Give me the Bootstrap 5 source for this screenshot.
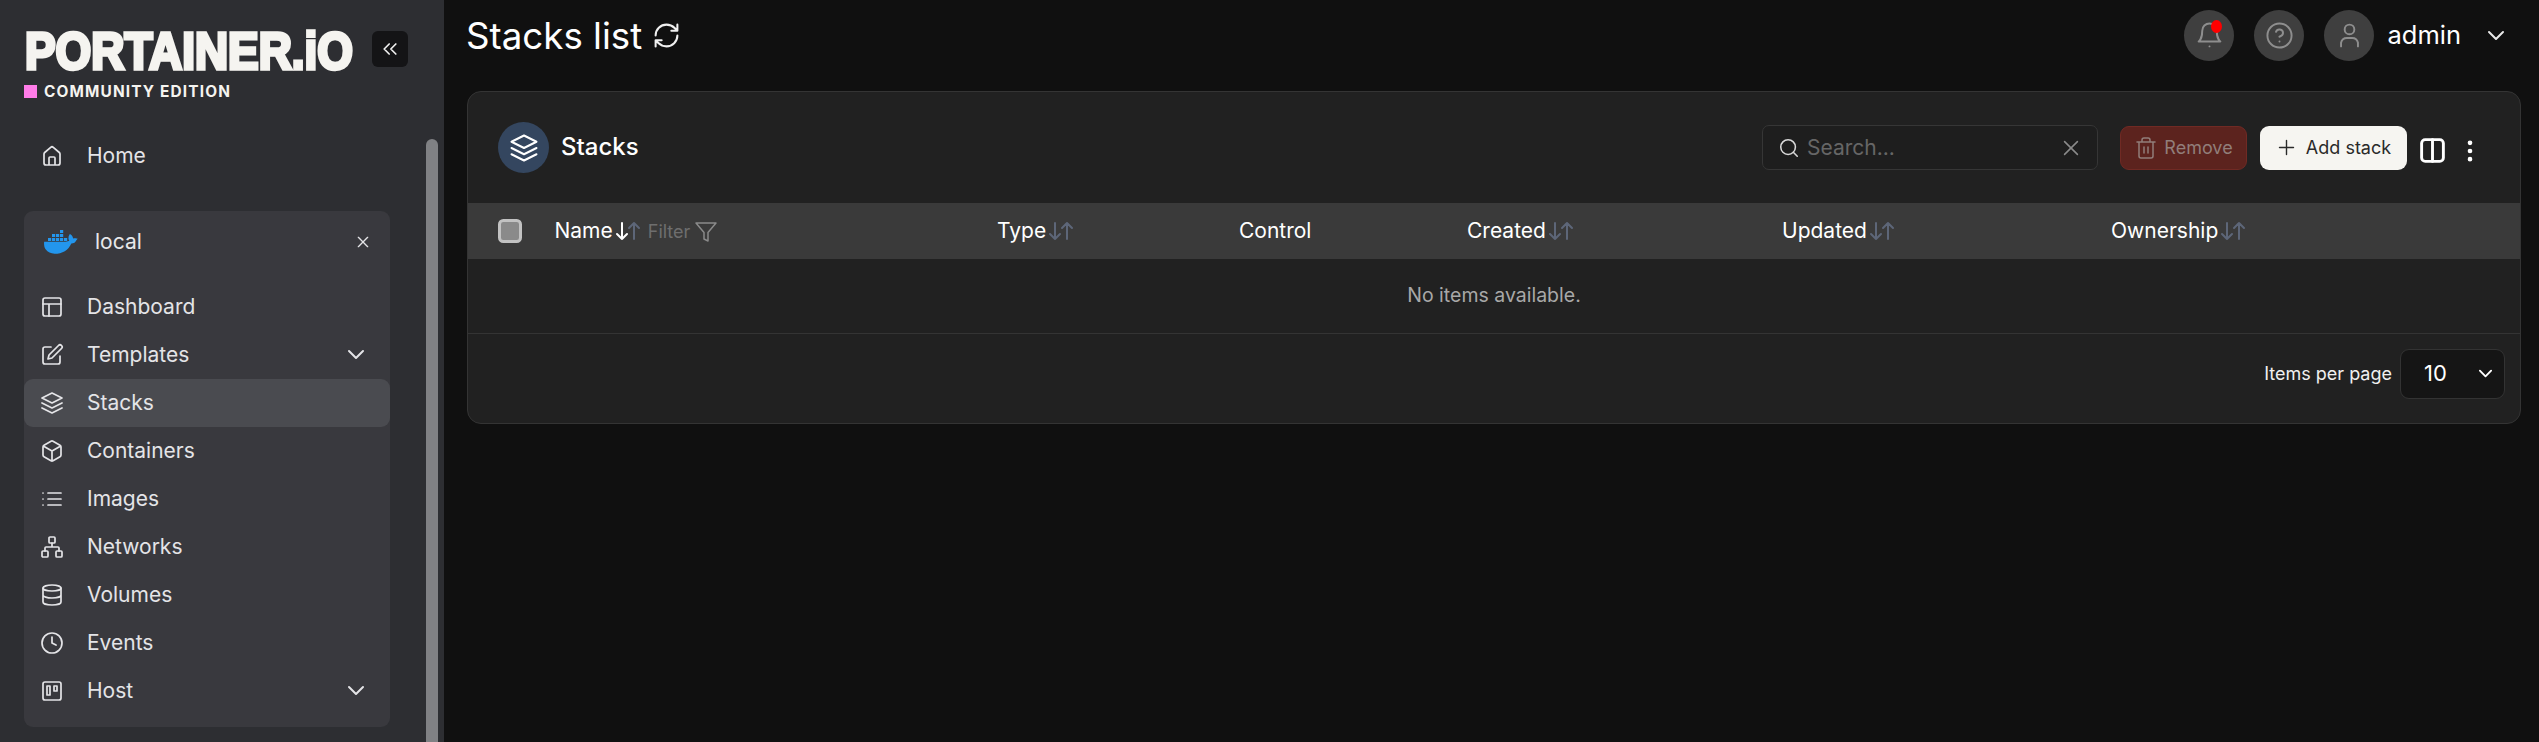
<!doctype html>
<html lang="en"><head><meta charset="utf-8"><title>Stacks list</title>
<link href="https://cdn.jsdelivr.net/npm/bootstrap@5.3.0/dist/css/bootstrap.min.css" rel="stylesheet">
<style>
html,body{height:742px;overflow:hidden}
body{background:#101010;color:#fff;font-family:Inter,"Liberation Sans",sans-serif;font-size:21px}
svg.ic{fill:none;stroke:currentColor;stroke-width:2;stroke-linecap:round;stroke-linejoin:round;flex:none}
.shell{height:742px}
.side{width:444px;background:#2d2e32;flex:none;overflow:hidden}
.side-in{width:366px;margin-left:24px;flex:none}
.brand{height:138px;padding-top:32px}
.brand-top{height:38px;width:384px}
.logo-svg{display:block;width:330px;height:38px;overflow:visible;flex:none}
.logo-svg text{font-family:"Liberation Sans",sans-serif;font-weight:700;font-size:51px;fill:#f5f4f0;stroke:#f5f4f0;stroke-width:3.6px}
.collapse-btn{width:36px;height:36px;background:#141416;border-radius:6px;color:#f0f0f0;margin-left:18px;margin-top:-1px;flex:none}
.edition{margin-top:15px;font-size:15.4px;line-height:12px;font-weight:700;letter-spacing:1.15px;color:#f5f4f0}
.pink{width:13px;height:13px;background:#ff7ce8;margin-right:7px}
.nav-row{height:48px;padding-left:16px;color:#e4e4e7;text-decoration:none;border-radius:9px;font-size:21px}
.nav-row .ic{width:24px;height:24px;margin-right:23px;stroke-width:1.7}
.nav-row:hover{color:#e4e4e7}
.nav-row .chev{margin-right:22px;margin-left:auto;width:24px;height:24px;stroke-width:2}
.home-row{margin-top:-6px;margin-bottom:31px;height:48px}
.env{background:#39393e;border-radius:9px;height:516px}
.env-head{height:72px;padding:0 19px 11px 20px;font-size:21px;color:#e4e4e7}
.env-head .lbl{margin-left:17px;color:#e8e8ea}
.on-row{background:#4a4b50}
.thumb{width:12px;margin:139px 0 0 36px;background:#808184;border-radius:6px 6px 0 0;flex:none}
.pg{min-width:0}
.topbar{height:91px;padding:10px 31px 0 22px}
.page-title{font-size:36.7px;font-weight:400;margin:0;line-height:50px;color:#fff}
.title-ref{width:29px;height:29px;margin-left:10px;color:#f0f0f0;stroke-width:1.7!important}
.circle{width:50px;height:51px;border-radius:50%;background:#3f3f3f;color:#8e8e8e;margin-right:20px}
.circle .ic{width:29px;height:29px;stroke-width:1.6}
.dot-red{right:12px;top:10px;width:11px;height:13px;background:#f00;border-radius:50%}
.uname{margin-left:-7px;font-size:25.5px;color:#fff;margin-right:23px}
.uchev{width:24px;height:24px;color:#e8e8e8;stroke-width:1.7}
.sheet{margin:0 18px 0 23px;background:#212121;border:1px solid #343434;border-radius:14px;height:333px;overflow:hidden}
.sheet-head{height:111px;padding:0 36px 0 30px}
.tile{width:51px;height:51px;border-radius:50%;background:#34465f;color:#fff}
.tile .ic{width:30px;height:30px;stroke-width:1.6}
.sheet-title{font-size:24px;font-weight:500;margin:-2px 0 0 12px;color:#fff;line-height:1}
.srch{width:336px;height:45px;border:1px solid #363636;border-radius:7px;background:#1e1e1e;padding:0 15px}
.srch input{background:transparent;border:0;padding:0 0 0 7px;font-size:21px;color:#fff;box-shadow:none}
.srch input::placeholder{color:#666}
.srch input:focus{background:transparent;box-shadow:none}
.srch .ic{width:22px;height:22px;stroke-width:1.7}
.s1{color:#d8d8d8}.s2{color:#8a8a8a}
.btn-rm{width:127px;height:44px;margin-left:22px;background:#5c231e;border:1px solid #702a24;color:#8e7c78;border-radius:9px;font-size:18px;padding:0}
.btn-rm:disabled{background:#5c231e;border-color:#702a24;color:#917e7a;opacity:1}
.btn-rm .ic{width:24px;height:24px;margin-right:6px;stroke-width:1.5}
.btn-add{width:147px;height:44px;margin-left:13px;background:#f6f5f1;color:#2a2a2a;border:0;border-radius:9px;font-size:18px;padding:0}
.btn-add:hover{background:#f6f5f1;color:#2a2a2a}
.btn-add .ic{width:21px;height:21px;margin-right:9px;stroke-width:1.6}
.tool{color:#fff;margin-top:6px}
.tool.cols{width:29px;height:29px;stroke-width:2.4!important;margin-left:11px}
.tool.dots{width:28px;height:28px;margin-left:9px;stroke-width:4!important}
.grid-t{table-layout:fixed;margin:0;--bs-table-bg:transparent;--bs-table-color:#fff;color:#fff}
.grid-t th{background:#3a3a3a;height:56px;padding:0 0 1px;border:0;font-weight:400;font-size:21px;vertical-align:middle;color:#fff}
.grid-t td{height:74px;padding:0;text-align:center;color:#a8a8a8;border-bottom:1px solid #343434;font-size:19.5px;background:transparent;vertical-align:middle}
.c0{width:86.500px}.c1{width:442.500px}.c2{width:242px}.c3{width:228px}.c4{width:315px}.c5{width:329px}
.chk{width:24px;height:24px;margin:0 0 0 30px;background-color:#8a8a8a;border:3px solid #c2c2c2;border-radius:6px;display:block;float:none}
.sorter{margin-left:2px;vertical-align:-3px;color:#5d6678;stroke-width:2}
.filt{color:#6e6e6e;font-size:18px;margin-left:7px}
.filt .ic{width:24px;height:24px;margin-left:4px;vertical-align:-6px;stroke-width:1.5;color:#8a8a8a}
.foot{height:88px;padding:0 15px 8px 0;font-size:18px;color:#f0f0f0}
.per{width:105px;height:50px;margin-left:8px;background-color:#151515;border:1px solid #333;border-radius:9px;color:#fff;font-size:22px;padding:0 0 0 23px;background-image:url("data:image/svg+xml,%3csvg xmlns='http://www.w3.org/2000/svg' viewBox='0 0 16 16'%3e%3cpath fill='none' stroke='%23ffffff' stroke-linecap='round' stroke-linejoin='round' stroke-width='2' d='m2 5 6 6 6-6'/%3e%3c/svg%3e");background-position:right 11px center;background-size:15px}
</style></head><body>
<svg width="0" height="0" class="position-absolute">
<symbol id="i-layers" viewBox="0 0 24 24"><path d="M12 2 2 7l10 5 10-5-10-5zM2 12l10 5 10-5M2 17l10 5 10-5"/></symbol>
<symbol id="i-chev" viewBox="0 0 24 24"><path d="m5 8 7 7 7-7"/></symbol>
</svg>
<div class="shell d-flex">
<aside class="side d-flex">
<div class="side-in">
<div class="brand">
<div class="brand-top d-flex">
<svg class="logo-svg" viewBox="0 0 330 38"><text x="1" y="36.500" textLength="328" lengthAdjust="spacingAndGlyphs">PORTAINER.iO</text></svg>
<div class="collapse-btn d-flex align-items-center justify-content-center"><svg class="ic" width="20" height="20" viewBox="0 0 24 24"><path d="m11 6-6 6 6 6M19 6l-6 6 6 6"/></svg></div>
</div>
<div class="edition d-flex align-items-center"><span class="pink"></span>COMMUNITY EDITION</div>
</div>
<a class="nav-row home-row d-flex align-items-center" href="#"><svg class="ic" viewBox="0 0 24 24"><path d="M4 10a2 2 0 0 1 .7-1.500l6-5.200a2 2 0 0 1 2.600 0l6 5.200A2 2 0 0 1 20 10v9a2 2 0 0 1-2 2H6a2 2 0 0 1-2-2zM9 21v-7a1 1 0 0 1 1-1h4a1 1 0 0 1 1 1v7"/></svg>Home</a>
<div class="env">
<div class="env-head d-flex align-items-center">
<svg width="34" height="26" viewBox="0 0 34 26" fill="#2396ed"><path d="M33.600 9.800c-.9-.6-3-.8-4.500-.4-.2-1.500-1-2.800-2.400-3.900l-.8-.5-.5.800c-.7 1-1 2.600-.9 3.900.1.700.3 1.500.8 2.100-.8.400-2 .9-3.700.9H.2l-.1.500c-.2 2.200.1 5.100 1.700 7.400 1.900 2.700 5 4.100 8.700 4.100 7.900 0 14-3.600 16.800-10.300 1.600.1 3.300-.4 4.300-1.900l.4-.700z"/><path d="M4 9h3.200v3H4zM8 9h3.200v3H8zM12 9h3.200v3H12zM16 9h3.200v3H16zM20 9h3.200v3H20zM8 5h3.200v3H8zM12 5h3.200v3H12zM16 5h3.200v3H16zM16 1h3.200v3H16z"/></svg>
<span class="lbl">local</span>
<svg class="ic ms-auto" width="16" height="16" viewBox="0 0 24 24"><path d="M5 5l14 14M19 5 5 19"/></svg>
</div>
<nav>
<a class="nav-row d-flex align-items-center" href="#"><svg class="ic" viewBox="0 0 24 24"><rect x="3" y="3" width="18" height="18" rx="2"/><path d="M3 9h18M9 21V9"/></svg>Dashboard</a>
<a class="nav-row d-flex align-items-center" href="#"><svg class="ic" viewBox="0 0 24 24"><path d="M11 4H5a2 2 0 0 0-2 2v13a2 2 0 0 0 2 2h13a2 2 0 0 0 2-2v-6"/><path d="M18.500 2.500a2.121 2.121 0 0 1 3 3L12 15l-4 1 1-4z"/></svg>Templates<svg class="ic chev" viewBox="0 0 24 24"><use href="#i-chev"/></svg></a>
<a class="nav-row on-row d-flex align-items-center" href="#"><svg class="ic" viewBox="0 0 24 24"><use href="#i-layers"/></svg>Stacks</a>
<a class="nav-row d-flex align-items-center" href="#"><svg class="ic" viewBox="0 0 24 24"><path d="M21 16V8a2 2 0 0 0-1-1.730l-7-4a2 2 0 0 0-2 0l-7 4A2 2 0 0 0 3 8v8a2 2 0 0 0 1 1.730l7 4a2 2 0 0 0 2 0l7-4A2 2 0 0 0 21 16zM3.270 6.960 12 12.010l8.730-5.050M12 22.080V12"/></svg>Containers</a>
<a class="nav-row d-flex align-items-center" href="#"><svg class="ic" viewBox="0 0 24 24"><path d="M8 6h13M8 12h13M8 18h13M3 6h.01M3 12h.01M3 18h.01"/></svg>Images</a>
<a class="nav-row d-flex align-items-center" href="#"><svg class="ic" viewBox="0 0 24 24"><rect x="9" y="2" width="6" height="6" rx="1"/><rect x="2" y="16" width="6" height="6" rx="1"/><rect x="16" y="16" width="6" height="6" rx="1"/><path d="M5 16v-3a1 1 0 0 1 1-1h12a1 1 0 0 1 1 1v3M12 12V8"/></svg>Networks</a>
<a class="nav-row d-flex align-items-center" href="#"><svg class="ic" viewBox="0 0 24 24"><ellipse cx="12" cy="5" rx="9" ry="3"/><path d="M21 12c0 1.660-4 3-9 3s-9-1.340-9-3M3 5v14c0 1.660 4 3 9 3s9-1.340 9-3V5"/></svg>Volumes</a>
<a class="nav-row d-flex align-items-center" href="#"><svg class="ic" viewBox="0 0 24 24"><circle cx="12" cy="12" r="10"/><path d="M12 6v6l4 2"/></svg>Events</a>
<a class="nav-row d-flex align-items-center" href="#"><svg class="ic" viewBox="0 0 24 24"><rect x="3" y="3" width="18" height="18" rx="2"/><rect x="7" y="7" width="3" height="9"/><rect x="14" y="7" width="3" height="5"/></svg>Host<svg class="ic chev" viewBox="0 0 24 24"><use href="#i-chev"/></svg></a>
</nav>
</div>
</div>
<div class="thumb"></div>
</aside>
<main class="pg flex-grow-1">
<header class="topbar d-flex">
<div class="d-flex align-items-center align-self-start" style="height:51px">
<h1 class="page-title">Stacks list</h1>
<svg class="ic title-ref" viewBox="0 0 24 24"><path d="M3 12a9 9 0 0 1 9-9 9.750 9.750 0 0 1 6.740 2.740L21 8M21 3v5h-5M21 12a9 9 0 0 1-9 9 9.750 9.750 0 0 1-6.740-2.740L3 16M8 16H3v5"/></svg>
</div>
<div class="ms-auto d-flex align-items-center align-self-start">
<div class="circle position-relative d-flex align-items-center justify-content-center"><svg class="ic" viewBox="0 0 24 24"><path d="M6 8a6 6 0 0 1 12 0c0 7 3 9 3 9H3s3-2 3-9M12 21h.01"/></svg><span class="dot-red position-absolute"></span></div>
<div class="circle d-flex align-items-center justify-content-center"><svg class="ic" viewBox="0 0 24 24"><circle cx="12" cy="12" r="10"/><path d="M9.090 9a3 3 0 0 1 5.830 1c0 2-3 3-3 3M12 17h.01"/></svg></div>
<div class="circle d-flex align-items-center justify-content-center"><svg class="ic" viewBox="0 0 24 24"><circle cx="12" cy="7" r="4"/><path d="M5 21v-3a5 5 0 0 1 5-4h4a5 5 0 0 1 5 4v3"/></svg></div>
<span class="uname">admin</span>
<svg class="ic uchev" viewBox="0 0 24 24"><use href="#i-chev"/></svg>
</div>
</header>
<section class="sheet">
<div class="sheet-head d-flex align-items-center">
<div class="tile d-flex align-items-center justify-content-center"><svg class="ic" viewBox="0 0 24 24"><use href="#i-layers"/></svg></div>
<h2 class="sheet-title">Stacks</h2>
<div class="ms-auto d-flex align-items-center">
<div class="srch d-flex align-items-center"><svg class="ic s1" viewBox="0 0 24 24"><circle cx="11" cy="11" r="8"/><path d="m21 21-4.300-4.300"/></svg><input class="form-control" placeholder="Search..." aria-label="Search"><svg class="ic s2" viewBox="0 0 24 24"><path d="M5 5l14 14M19 5 5 19"/></svg></div>
<button class="btn btn-rm d-flex align-items-center justify-content-center" disabled><svg class="ic" viewBox="0 0 24 24"><path d="M3 6h18M8 6V4a2 2 0 0 1 2-2h4a2 2 0 0 1 2 2v2M5 6v14a2 2 0 0 0 2 2h10a2 2 0 0 0 2-2V6M10 11v6M14 11v6"/></svg>Remove</button>
<button class="btn btn-add d-flex align-items-center justify-content-center"><svg class="ic" viewBox="0 0 24 24"><path d="M12 4v16M4 12h16"/></svg>Add stack</button>
<svg class="ic tool cols" viewBox="0 0 24 24"><rect x="3" y="3" width="18" height="18" rx="3"/><path d="M12 3v18"/></svg>
<svg class="ic tool dots" viewBox="0 0 24 24"><path d="M12 5h.01M12 12h.01M12 19h.01"/></svg>
</div>
</div>
<table class="table grid-t">
<colgroup><col class="c0"><col class="c1"><col class="c2"><col class="c3"><col class="c4"><col class="c5"><col></colgroup>
<thead><tr>
<th><input class="form-check-input chk" type="checkbox" aria-label="Select all"></th>
<th>Name<svg class="ic sorter" width="26" height="20" viewBox="0 0 26 20"><path stroke="#fff" d="M7 2v16M2 13l5 5 5-5"/><path d="M19 18V2M14 7l5-5 5 5"/></svg><span class="filt">Filter<svg class="ic" viewBox="0 0 24 24"><path d="M22 3H2l8 9.500V19l4 2v-8.500z"/></svg></span></th>
<th>Type<svg class="ic sorter" width="26" height="20" viewBox="0 0 26 20"><path d="M7 2v16M2 13l5 5 5-5M19 18V2M14 7l5-5 5 5"/></svg></th>
<th>Control</th>
<th>Created<svg class="ic sorter" width="26" height="20" viewBox="0 0 26 20"><path d="M7 2v16M2 13l5 5 5-5M19 18V2M14 7l5-5 5 5"/></svg></th>
<th>Updated<svg class="ic sorter" width="26" height="20" viewBox="0 0 26 20"><path d="M7 2v16M2 13l5 5 5-5M19 18V2M14 7l5-5 5 5"/></svg></th>
<th>Ownership<svg class="ic sorter" width="26" height="20" viewBox="0 0 26 20"><path d="M7 2v16M2 13l5 5 5-5M19 18V2M14 7l5-5 5 5"/></svg></th>
</tr></thead>
<tbody><tr><td colspan="7">No items available.</td></tr></tbody>
</table>
<div class="foot d-flex align-items-center justify-content-end">
<span>Items per page</span>
<select class="form-select per" aria-label="Items per page"><option>10</option></select>
</div>
</section>
</main>
</div>
</body></html>
